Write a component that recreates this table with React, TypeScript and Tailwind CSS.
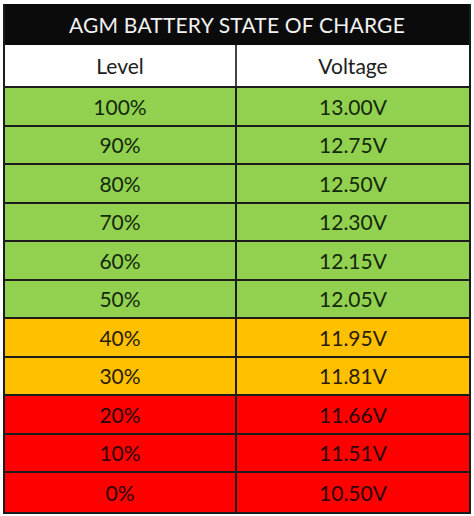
import React from "react";

const rows: { level: string; volt: string; bg: string; fg: string }[] = [
  { level: "100%", volt: "13.00V", bg: "bg-[#92d050]", fg: "text-[#13290b]" },
  { level: "90%", volt: "12.75V", bg: "bg-[#92d050]", fg: "text-[#13290b]" },
  { level: "80%", volt: "12.50V", bg: "bg-[#92d050]", fg: "text-[#13290b]" },
  { level: "70%", volt: "12.30V", bg: "bg-[#92d050]", fg: "text-[#13290b]" },
  { level: "60%", volt: "12.15V", bg: "bg-[#92d050]", fg: "text-[#13290b]" },
  { level: "50%", volt: "12.05V", bg: "bg-[#92d050]", fg: "text-[#13290b]" },
  { level: "40%", volt: "11.95V", bg: "bg-[#ffc000]", fg: "text-[#2a1e05]" },
  { level: "30%", volt: "11.81V", bg: "bg-[#ffc000]", fg: "text-[#2a1e05]" },
  { level: "20%", volt: "11.66V", bg: "bg-[#ff0000]", fg: "text-[#2a0505]" },
  { level: "10%", volt: "11.51V", bg: "bg-[#ff0000]", fg: "text-[#2a0505]" },
  { level: "0%", volt: "10.50V", bg: "bg-[#ff0000]", fg: "text-[#2a0505]" },
];

export default function App() {
  return (
    <div
      className="w-[474px] h-[516px] bg-white pt-[4px] pl-[3px]"
      style={{ fontFamily: "Lato, 'Open Sans', sans-serif" }}
    >
      <div className="w-[468px] border-l-2 border-r-2 border-b-2 border-[#1c1c1c]">
        <div className="h-[41px] bg-[#0b0b0b] flex items-center justify-center text-[#f2f2f2] text-[21px] tracking-[0.2px]">
          AGM BATTERY STATE OF CHARGE
        </div>
        <div className="grid grid-cols-2 h-[43px] bg-white text-[#202020] text-[21px] border-b-2 border-[#1c1c1c]">
          <div className="flex items-center justify-center border-r-2 border-[#444]">Level</div>
          <div className="flex items-center justify-center">Voltage</div>
        </div>
        {rows.map((r, i) => (
          <div
            key={r.level}
            className={`grid grid-cols-2 h-[38.5px] text-[21px] ${r.bg} ${r.fg} ${i < rows.length - 1 ? "border-b-2 border-[#1c1c1c]" : ""}`}
          >
            <div className="flex items-center justify-center border-r-2 border-[#1c1c1c]">{r.level}</div>
            <div className="flex items-center justify-center">{r.volt}</div>
          </div>
        ))}
      </div>
    </div>
  );
}
